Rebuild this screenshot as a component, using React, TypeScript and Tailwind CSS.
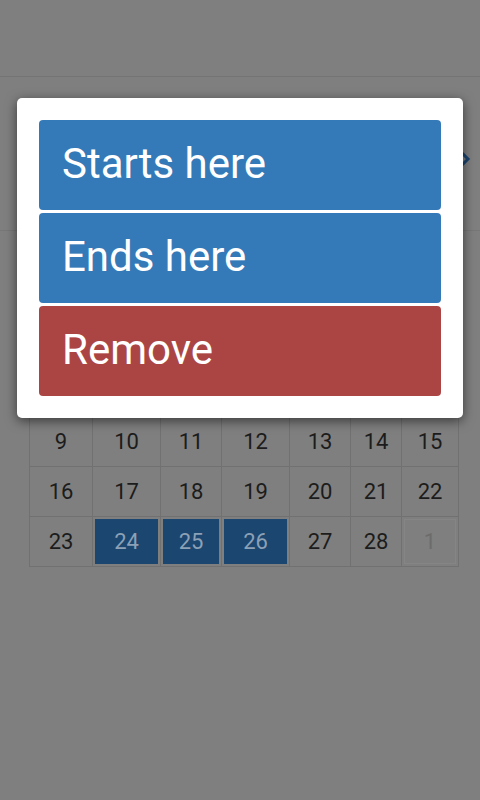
import React from 'react';

type Day = { n: number; muted?: boolean; picked?: boolean };

const rows: Day[][] = [
  [{ n: 26, muted: true }, { n: 27, muted: true }, { n: 28, muted: true }, { n: 29, muted: true }, { n: 30, muted: true }, { n: 31, muted: true }, { n: 1 }],
  [2, 3, 4, 5, 6, 7, 8].map((n) => ({ n })),
  [9, 10, 11, 12, 13, 14, 15].map((n) => ({ n })),
  [16, 17, 18, 19, 20, 21, 22].map((n) => ({ n })),
  [
    { n: 23 },
    { n: 24, picked: true },
    { n: 25, picked: true },
    { n: 26, picked: true },
    { n: 27 },
    { n: 28 },
    { n: 1, muted: true },
  ],
];

const weekdays = ['Mo', 'Tu', 'We', 'Th', 'Fr', 'Sa', 'Su'];

const Cell: React.FC<{ day: Day }> = ({ day }) => (
  <div className="h-[50px] border-r border-b border-[#717171] p-[2px]">
    <div
      className={`h-full flex items-center justify-center text-[22px] ${
        day.picked
          ? 'bg-[#1b4670] text-[#8ca0b6]'
          : day.muted
          ? 'text-[#6c6c6c] border border-[#858585]'
          : 'text-[#1c1c1c]'
      }`}
    >
      {day.n}
    </div>
  </div>
);

export default function App() {
  return (
    <div
      className="relative w-[480px] h-[800px] overflow-hidden bg-[#7f7f7f]"
      style={{ fontFamily: 'Roboto, "Noto Sans", sans-serif' }}
    >
      {/* dimmed page behind the dialog */}
      <header className="h-[77px] border-b border-[#747474]" />

      <section className="relative h-[154px] border-b border-[#777777]">
        <svg
          className="absolute left-[455px] top-[72px]"
          width="20"
          height="20"
          viewBox="0 0 20 20"
          fill="none"
          stroke="#1a4470"
          strokeWidth="3"
        >
          <path d="M7 4l6 6-6 6" />
        </svg>
      </section>

      <div className="ml-[29px] w-[429px]">
        <div className="h-[50px] flex items-center justify-center text-[20px] text-[#1c1c1c]">February</div>
        <div className="grid grid-cols-[63px_68px_61px_68px_61px_51px_57px] border-l border-[#717171]">
          {weekdays.map((w) => (
            <div key={w} className="h-[36px] flex items-center justify-center text-[16px] text-[#1c1c1c] border-r border-b border-[#717171]">
              {w}
            </div>
          ))}
          {rows.flat().map((d, i) => (
            <Cell key={i} day={d} />
          ))}
        </div>
      </div>

      {/* dialog */}
      <div className="absolute left-[17px] top-[98px] w-[446px] bg-white rounded-[5px] shadow-[0_3px_12px_rgba(0,0,0,0.55)] p-[22px] flex flex-col gap-[3px]">
        <button className="h-[90px] rounded-[4px] bg-[#357ab8] text-white text-[42px] text-left pl-[23px] pb-[4px]">
          Starts here
        </button>
        <button className="h-[90px] rounded-[4px] bg-[#357ab8] text-white text-[42px] text-left pl-[23px] pb-[4px]">
          Ends here
        </button>
        <button className="h-[90px] rounded-[4px] bg-[#ab4544] text-white text-[42px] text-left pl-[23px] pb-[4px]">
          Remove
        </button>
      </div>
    </div>
  );
}
